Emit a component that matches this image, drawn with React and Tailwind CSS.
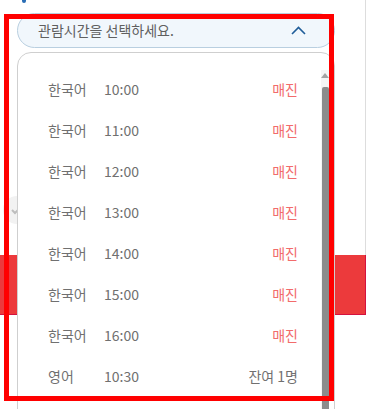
import React from "react";

const rows = [
  { lang: "한국어", time: "10:00", status: "매진", soldOut: true },
  { lang: "한국어", time: "11:00", status: "매진", soldOut: true },
  { lang: "한국어", time: "12:00", status: "매진", soldOut: true },
  { lang: "한국어", time: "13:00", status: "매진", soldOut: true },
  { lang: "한국어", time: "14:00", status: "매진", soldOut: true },
  { lang: "한국어", time: "15:00", status: "매진", soldOut: true },
  { lang: "한국어", time: "16:00", status: "매진", soldOut: true },
  { lang: "영어", time: "10:30", status: "잔여 1명", soldOut: false },
];

export default function App() {
  return (
    <div
      className="relative w-[369px] h-[409px] overflow-hidden bg-white"
      style={{ fontFamily: '"Noto Sans CJK KR", "Noto Sans", sans-serif' }}
    >
      {/* page behind the dropdown */}
      <div className="absolute left-[22px] top-[-4px] w-[4px] h-[7px] rounded-full bg-[#2a6db5]" />
      <div className="absolute left-[365px] top-0 w-px h-[315px] bg-[#dddddd]" />
      <div className="absolute left-[3px] top-[196px] w-[28px] h-[28px] rounded-full bg-[#f2f2f2] flex items-center justify-center">
        <svg width="14" height="14" viewBox="0 0 14 14" fill="none">
          <path d="M2 7l3 3 7-7" stroke="#bdbdbd" strokeWidth="2" />
        </svg>
      </div>
      <div className="absolute left-0 top-[255px] w-[366px] h-[60px] bg-[#ec3a3c] border-b border-r border-[#d4123e]" />

      {/* select */}
      <div className="relative flex flex-col pl-[17px] pt-[13px] w-[335px]">
        <div className="flex items-center justify-between h-[35px] rounded-full border border-[#b9cfe0] bg-[#f1f7fc] pl-[20px] pr-[28px]">
          <span className="text-[14px] text-[#5f5f5f]">관람시간을 선택하세요.</span>
          <svg width="15" height="9" viewBox="0 0 15 9" fill="none">
            <path d="M1 8l6.5-6.5L14 8" stroke="#1f5d99" strokeWidth="1.6" />
          </svg>
        </div>

        <div className="relative mt-[4px] h-[400px] rounded-t-[14px] border border-[#cfcfcf] bg-white pt-[16px] overflow-hidden">
          {rows.map((r, i) => (
            <div key={i} className="flex items-center h-[41px] pl-[30px] pr-[36px] text-[14px] text-[#707070]">
              <span className="w-[56px]">{r.lang}</span>
              <span>{r.time}</span>
              <span className={`ml-auto ${r.soldOut ? "text-[#f26b6b]" : "text-[#707070]"}`}>{r.status}</span>
            </div>
          ))}

          {/* scrollbar */}
          <div className="absolute right-[5px] top-[17px] bottom-0 w-[8px] bg-[#f5f5f5] flex flex-col items-center">
            <div className="mt-[3px] w-0 h-0 border-l-[4px] border-r-[4px] border-b-[5px] border-l-transparent border-r-transparent border-b-[#a3a3a3]" />
            <div className="mt-[9px] w-[7px] flex-1 rounded-t-[2px] bg-[#8c8c8c]" />
          </div>
        </div>
      </div>

      {/* annotation frame */}
      <div className="absolute left-[4px] top-[14px] w-[330px] h-[387px] border-[5px] border-[#ff0000] pointer-events-none" />
    </div>
  );
}
